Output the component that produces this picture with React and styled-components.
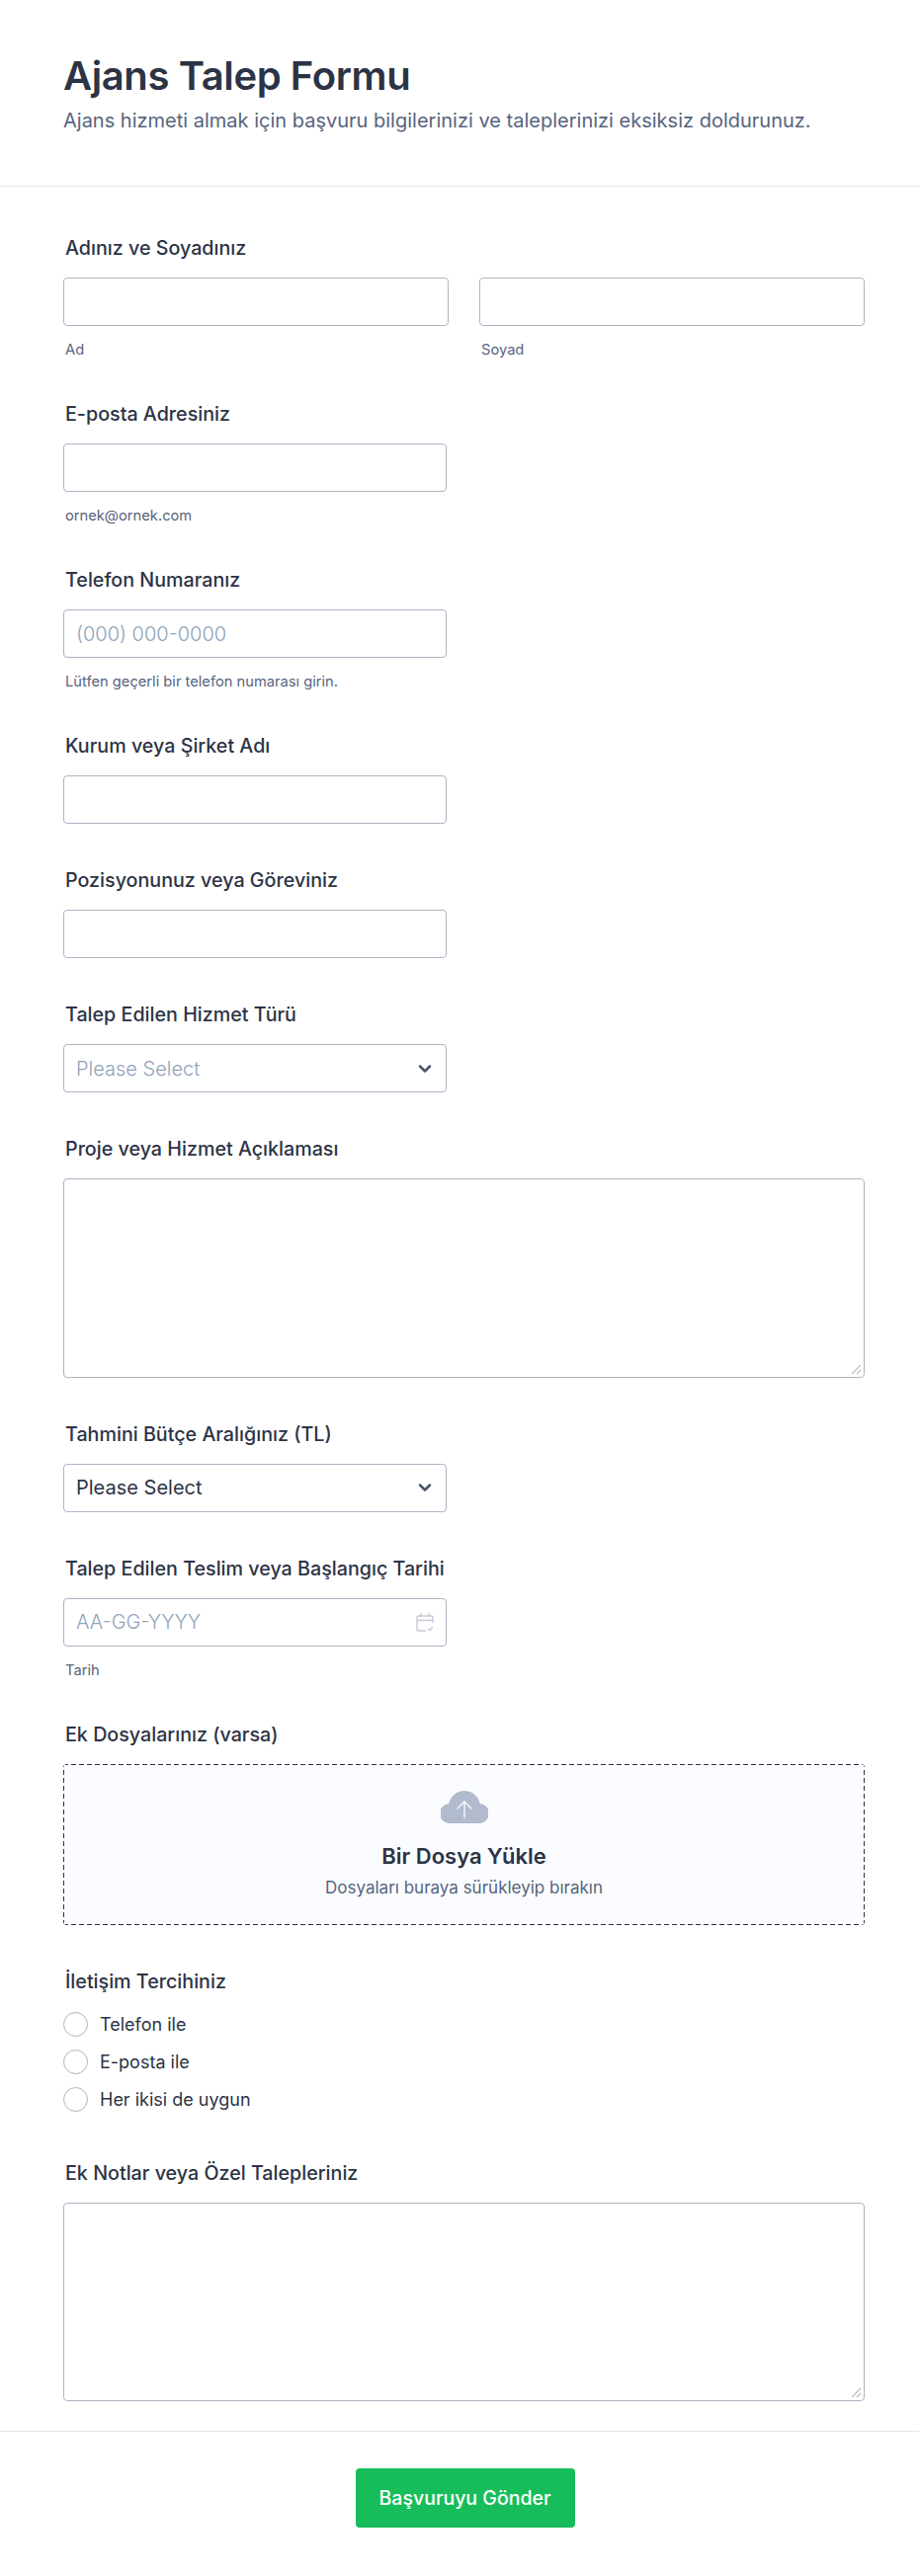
import styled, { createGlobalStyle } from "styled-components";
import { ChevronDown } from "lucide-react";

const GlobalStyle = createGlobalStyle`
  body {
    margin: 0;
    background: #fff;
    font-family: Inter, "Liberation Sans", sans-serif;
    color: #2c3345;
  }
  * { box-sizing: border-box; }
`;

const Page = styled.div`
  width: 930px;
  min-height: 2608px;
  background: #fff;
`;

const Header = styled.header`
  height: 189px;
  padding: 51px 64px 0;
  border-bottom: 1px solid #e3e5ef;
`;

const Title = styled.h1`
  margin: 0;
  font-size: 40px;
  line-height: 52px;
  font-weight: 600;
  letter-spacing: -0.4px;
  color: #2c3345;
`;

const Subtitle = styled.p`
  margin: 5px 0 0;
  font-size: 20px;
  line-height: 28px;
  color: #57647e;
`;

const Body = styled.main`
  padding: 50px 55px 30px 64px;
`;

const Field = styled.section`
  margin-bottom: 45px;

  &:last-child {
    margin-bottom: 0;
  }
`;

const Label = styled.label`
  display: block;
  margin: 0 0 18px 2px;
  font-size: 19.7px;
  line-height: 24px;
  font-weight: 500;
  color: #2c3345;
`;

const NameRow = styled.div`
  display: grid;
  grid-template-columns: 1fr 1fr;
  gap: 31px;
`;

const Input = styled.div`
  position: relative;
  display: flex;
  align-items: center;
  justify-content: space-between;
  width: ${(p) => (p.$wide ? "100%" : "388px")};
  height: ${(p) => (p.$tall ? "201.5px" : "49px")};
  padding: 0 12px;
  background: #fff;
  border: 1px solid #aeb4c3;
  border-radius: 4px;
  font-size: 20px;
  font-weight: ${(p) => (p.$filled ? 400 : 300)};
  color: ${(p) => (p.$filled ? "#2c3345" : "#8fa3bb")};
`;

const Hint = styled.div`
  margin: 15px 0 -1px 2px;
  font-size: 14.7px;
  line-height: 18px;
  color: #57647e;
`;

const Resize = styled.svg`
  position: absolute;
  right: 2px;
  bottom: 2px;
`;

const Chevron = styled(ChevronDown)`
  color: #4a5568;
  margin-right: -1px;
`;

const Upload = styled.div`
  display: flex;
  flex-direction: column;
  align-items: center;
  height: 163px;
  padding-top: 27px;
  border-radius: 4px;
  background-color: #fbfcff;
  background-image:
    repeating-linear-gradient(90deg, #2c3345 0 5px, transparent 5px 8px),
    repeating-linear-gradient(90deg, #2c3345 0 5px, transparent 5px 8px),
    repeating-linear-gradient(0deg, #2c3345 0 5px, transparent 5px 8px),
    repeating-linear-gradient(0deg, #2c3345 0 5px, transparent 5px 8px);
  background-size: 100% 1px, 100% 1px, 1px 100%, 1px 100%;
  background-position: 0 0, 0 100%, 0 0, 100% 0;
  background-repeat: no-repeat;
`;

const UploadTitle = styled.div`
  margin-top: 19px;
  font-size: 22px;
  line-height: 28px;
  font-weight: 600;
  color: #2c3345;
`;

const UploadText = styled.div`
  margin-top: 7px;
  font-size: 17px;
  line-height: 22px;
  color: #57647e;
`;

const RadioList = styled.div`
  display: flex;
  flex-direction: column;
  gap: 13px;
  padding: 1px 0 5px;
`;

const RadioRow = styled.div`
  display: flex;
  align-items: center;
  gap: 12px;
  height: 25px;
  font-size: 18px;
  color: #2c3345;
`;

const RadioDot = styled.span`
  width: 25px;
  height: 25px;
  border: 1px solid #aeb4c3;
  border-radius: 50%;
  background: #fff;
`;

const Footer = styled.footer`
  display: flex;
  justify-content: center;
  padding: 37px 55px 0 66px;
  border-top: 1px solid #e3e5ef;
`;

const Submit = styled.button`
  width: 222px;
  height: 60px;
  border: 0;
  border-radius: 4px;
  background: #18bd5b;
  color: #fff;
  font-family: inherit;
  font-size: 19.5px;
  font-weight: 500;
`;

function ResizeHandle() {
  return (
    <Resize width="11" height="11" viewBox="0 0 11 11">
      <path d="M1 10L10 1M6 10L10 6" stroke="#b8bdc9" strokeWidth="1.2" />
    </Resize>
  );
}

function CalendarIcon() {
  return (
    <svg width="18" height="20" viewBox="0 0 18 20" fill="none" stroke="#c5cad6" strokeWidth="1.4">
      <path d="M17 11V6a2 2 0 0 0-2-2H3a2 2 0 0 0-2 2v11a2 2 0 0 0 2 2h7" />
      <path d="M1 8.500h16M5 1v4M13 1v4M12 16.500l2 2 3-3.500" />
    </svg>
  );
}

function CloudIcon() {
  return (
    <svg width="48" height="33" viewBox="0 0 48 33">
      <path d="M10 33A10 10 0 0 1 8.300 13A16 16 0 0 1 39.700 13A10 10 0 0 1 38 33Z" fill="#b1bbcd" />
      <path d="M24 27.500V11.500M16.500 18.500L24 11L31.500 18.500" fill="none" stroke="#f3f5fa" strokeWidth="1.5" />
    </svg>
  );
}

export default function App() {
  return (
    <Page>
      <GlobalStyle />
      <Header>
        <Title>Ajans Talep Formu</Title>
        <Subtitle>Ajans hizmeti almak için başvuru bilgilerinizi ve taleplerinizi eksiksiz doldurunuz.</Subtitle>
      </Header>
      <Body>
        <Field>
          <Label>Adınız ve Soyadınız</Label>
          <NameRow>
            <div>
              <Input $wide />
              <Hint>Ad</Hint>
            </div>
            <div>
              <Input $wide />
              <Hint>Soyad</Hint>
            </div>
          </NameRow>
        </Field>
        <Field>
          <Label>E-posta Adresiniz</Label>
          <Input />
          <Hint>ornek@ornek.com</Hint>
        </Field>
        <Field>
          <Label>Telefon Numaranız</Label>
          <Input>(000) 000-0000</Input>
          <Hint>Lütfen geçerli bir telefon numarası girin.</Hint>
        </Field>
        <Field>
          <Label>Kurum veya Şirket Adı</Label>
          <Input />
        </Field>
        <Field>
          <Label>Pozisyonunuz veya Göreviniz</Label>
          <Input />
        </Field>
        <Field>
          <Label>Talep Edilen Hizmet Türü</Label>
          <Input>
            Please Select
            <Chevron size={20} strokeWidth={3} />
          </Input>
        </Field>
        <Field>
          <Label>Proje veya Hizmet Açıklaması</Label>
          <Input $wide $tall>
            <ResizeHandle />
          </Input>
        </Field>
        <Field>
          <Label>Tahmini Bütçe Aralığınız (TL)</Label>
          <Input $filled>
            Please Select
            <Chevron size={20} strokeWidth={3} />
          </Input>
        </Field>
        <Field>
          <Label>Talep Edilen Teslim veya Başlangıç Tarihi</Label>
          <Input>
            AA-GG-YYYY
            <CalendarIcon />
          </Input>
          <Hint>Tarih</Hint>
        </Field>
        <Field>
          <Label>Ek Dosyalarınız (varsa)</Label>
          <Upload>
            <CloudIcon />
            <UploadTitle>Bir Dosya Yükle</UploadTitle>
            <UploadText>Dosyaları buraya sürükleyip bırakın</UploadText>
          </Upload>
        </Field>
        <Field>
          <Label>İletişim Tercihiniz</Label>
          <RadioList>
            <RadioRow>
              <RadioDot />
              Telefon ile
            </RadioRow>
            <RadioRow>
              <RadioDot />
              E-posta ile
            </RadioRow>
            <RadioRow>
              <RadioDot />
              Her ikisi de uygun
            </RadioRow>
          </RadioList>
        </Field>
        <Field>
          <Label>Ek Notlar veya Özel Talepleriniz</Label>
          <Input $wide $tall>
            <ResizeHandle />
          </Input>
        </Field>
      </Body>
      <Footer>
        <Submit>Başvuruyu Gönder</Submit>
      </Footer>
    </Page>
  );
}
